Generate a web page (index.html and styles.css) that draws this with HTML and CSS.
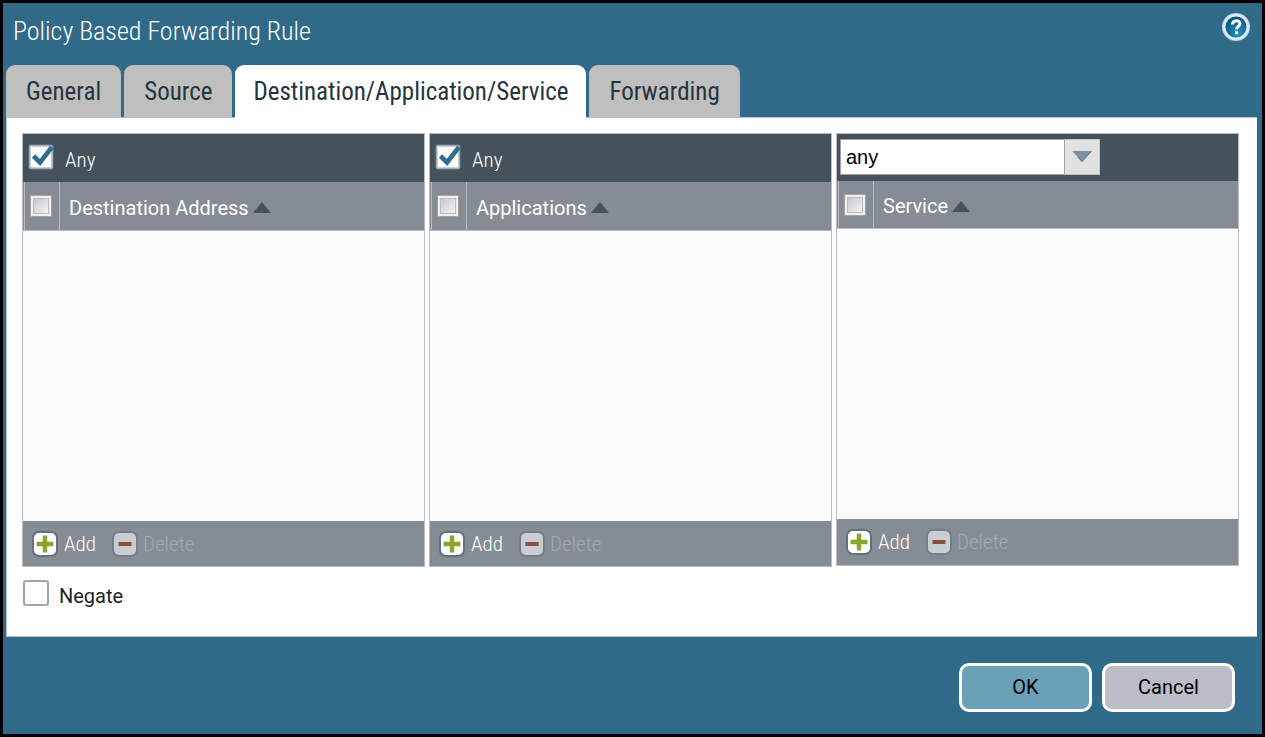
FILE: index.html
```
<!DOCTYPE html>
<html lang="en">
<head>
<meta charset="utf-8">
<meta name="viewport" content="width=device-width, initial-scale=1">
<title>Policy Based Forwarding Rule</title>
<link rel="stylesheet" href="styles.css">
</head>
<body>
<svg class="defs" aria-hidden="true">
  <defs>
    <radialGradient id="helpFill" cx=".6" cy=".8" r=".8"><stop offset="0" stop-color="#2590bd"/><stop offset="1" stop-color="#07517f"/></radialGradient>
    <linearGradient id="boxFill" x1="0" y1="0" x2="1" y2="1"><stop offset="0" stop-color="#c2c6d0"/><stop offset="1" stop-color="#f6f6f7"/></linearGradient>
    <symbol id="ticked" viewBox="0 0 26 26">
      <rect x=".5" y=".5" width="25" height="25" rx="2" fill="#71828e"/>
      <rect x="1.5" y="1.5" width="23" height="23" rx="1" fill="#c5d2dc"/>
      <rect x="3" y="3" width="20" height="20" fill="#fff"/>
      <path d="M5.500 12l6.500 6.500L24 3" fill="none" stroke="#2f6c8d" stroke-width="4.600"/>
    </symbol>
    <symbol id="unticked" viewBox="0 0 22 22">
      <rect x=".5" y=".5" width="21" height="21" fill="#f0f0f1" stroke="#a5a19d"/>
      <rect x="3.5" y="3.5" width="15" height="15" fill="url(#boxFill)" stroke="#b9bbc1"/>
    </symbol>
    <symbol id="sort" viewBox="0 0 18 11"><path d="M9 0l9 11H0z" fill="#46535d"/></symbol>
    <symbol id="plus" viewBox="0 0 26 26">
      <rect x="1" y="1" width="24" height="24" rx="6" fill="#fff" stroke="#5d7382" stroke-width="2"/>
      <path d="M4.500 13h17M13 4.500v17" stroke="#8ba62f" stroke-width="4.500"/>
    </symbol>
    <symbol id="minus" viewBox="0 0 26 26">
      <rect x="1" y="1" width="24" height="24" rx="6" fill="#caced2" stroke="#70808c" stroke-width="2"/>
      <path d="M6.500 13h13" stroke="#8b4e3f" stroke-width="4"/>
    </symbol>
  </defs>
</svg>
<main class="dialog">
  <header class="titlebar">
    <h1 class="title">Policy Based Forwarding Rule</h1>
    <button class="help" type="button" aria-label="Help">
      <svg viewBox="0 0 28 28"><circle cx="14" cy="14" r="14" fill="#b9d3e5"/><circle cx="14" cy="14" r="13" fill="#e0edf7"/><circle cx="14" cy="14" r="10.500" fill="url(#helpFill)"/><path d="M10.500 11.500c0-5 7.500-5 7.500-.7 0 2.600-3.500 2.800-3.500 5.700M14.500 18.200v3" fill="none" stroke="#fff" stroke-width="3"/></svg>
    </button>
  </header>
  <div class="tabs" role="tablist">
    <button class="tab" type="button" role="tab">General</button>
    <button class="tab" type="button" role="tab">Source</button>
    <button class="tab tab-active" type="button" role="tab" aria-selected="true">Destination/Application/Service</button>
    <button class="tab" type="button" role="tab">Forwarding</button>
  </div>
  <section class="content">
    <div class="panels">
      <section class="panel">
        <div class="toolbar">
          <label class="check"><span class="box"><input type="checkbox" checked><svg aria-hidden="true"><use href="#ticked"/></svg></span><span class="check-text">Any</span></label>
        </div>
        <table class="columns"><thead><tr>
          <th class="pick"><label class="box box-small"><input type="checkbox" aria-label="Select all addresses"><svg aria-hidden="true"><use href="#unticked"/></svg></label></th>
          <th class="name"><span class="heading">Destination Address<svg class="sort" aria-hidden="true"><use href="#sort"/></svg></span></th>
        </tr></thead></table>
        <div class="rows"></div>
        <footer class="actions">
          <button class="action" type="button"><svg aria-hidden="true"><use href="#plus"/></svg>Add</button>
          <button class="action" type="button" disabled><svg aria-hidden="true"><use href="#minus"/></svg>Delete</button>
        </footer>
      </section>
      <section class="panel">
        <div class="toolbar">
          <label class="check"><span class="box"><input type="checkbox" checked><svg aria-hidden="true"><use href="#ticked"/></svg></span><span class="check-text">Any</span></label>
        </div>
        <table class="columns"><thead><tr>
          <th class="pick"><label class="box box-small"><input type="checkbox" aria-label="Select all applications"><svg aria-hidden="true"><use href="#unticked"/></svg></label></th>
          <th class="name"><span class="heading">Applications<svg class="sort" aria-hidden="true"><use href="#sort"/></svg></span></th>
        </tr></thead></table>
        <div class="rows"></div>
        <footer class="actions">
          <button class="action" type="button"><svg aria-hidden="true"><use href="#plus"/></svg>Add</button>
          <button class="action" type="button" disabled><svg aria-hidden="true"><use href="#minus"/></svg>Delete</button>
        </footer>
      </section>
      <section class="panel panel-service">
        <div class="toolbar">
          <div class="combo">
            <select aria-label="Service match"><option>any</option></select>
            <span class="trigger"><svg viewBox="0 0 20 11" aria-hidden="true"><path d="M0 0h20L10 11z" fill="#7f929f"/><path d="M19 .5L10 10.500 6 6" fill="none" stroke="#5f727f"/></svg></span>
          </div>
        </div>
        <table class="columns"><thead><tr>
          <th class="pick"><label class="box box-small"><input type="checkbox" aria-label="Select all services"><svg aria-hidden="true"><use href="#unticked"/></svg></label></th>
          <th class="name"><span class="heading">Service<svg class="sort" aria-hidden="true"><use href="#sort"/></svg></span></th>
        </tr></thead></table>
        <div class="rows"></div>
        <footer class="actions">
          <button class="action" type="button"><svg aria-hidden="true"><use href="#plus"/></svg>Add</button>
          <button class="action" type="button" disabled><svg aria-hidden="true"><use href="#minus"/></svg>Delete</button>
        </footer>
      </section>
    </div>
    <label class="negate"><input type="checkbox"><span>Negate</span></label>
  </section>
  <footer class="buttons">
    <button class="button button-ok" type="button">OK</button>
    <button class="button" type="button">Cancel</button>
  </footer>
</main>
</body>
</html>
```
FILE: styles.css
```
* { box-sizing: border-box; }
body {
  margin: 0;
  font: 20px/24px Roboto, sans-serif;
  color: #202428;
}
button, input, select { margin: 0; font: inherit; }
button { border: 0; padding: 0; background: none; color: inherit; }
svg { display: block; }
.defs { position: absolute; width: 0; height: 0; }

.dialog {
  display: flex;
  flex-direction: column;
  min-height: 100vh;
  padding: 0 5px 0 3px;
  border: 3px solid #000;
  background: #306a88;
}
.titlebar {
  display: flex;
  justify-content: space-between;
  align-items: flex-start;
  height: 62px;
  padding: 10px 7px 0 7px;
}
.title {
  margin: 0;
  font: 300 26px/36px "Roboto Condensed", Roboto, sans-serif;
  color: #fff;
}
.help svg { width: 28px; height: 28px; }

.tabs { display: flex; gap: 3px; margin-bottom: -1px; }
.tab {
  height: 53px;
  padding: 0 20px;
  border-radius: 9px 9px 0 0;
  background: #bfbfbf;
  color: #26343c;
  font: 25px/53px "Roboto Condensed", Roboto, sans-serif;
}
.tab-active {
  position: relative;
  padding: 0 18px;
  background: #fff;
}

.content {
  flex: 1;
  display: flex;
  flex-direction: column;
  padding: 15px 18px 28px 15px;
  border: solid #bbbdc2;
  border-width: 1px 0 1px 1px;
  background: #fff;
}
.panels {
  flex: 1;
  display: grid;
  grid-template-columns: repeat(3, 1fr);
  gap: 4px;
}
.panel {
  display: flex;
  flex-direction: column;
  border: 1px solid #b9bcc6;
  background: #fbfdfc;
}
.panel-service { margin-bottom: 1px; }
.toolbar {
  display: flex;
  align-items: center;
  height: 48px;
  padding-left: 5px;
  background: #46525b;
}
.panel-service .toolbar { height: 47px; padding: 0 0 2px 3px; }
.check {
  display: flex;
  gap: 11px;
  font: 300 21px/26px "Roboto Condensed", Roboto, sans-serif;
  color: #fff;
}
.check-text { padding-top: 3px; }
.box { display: grid; width: 26px; height: 26px; }
.box > * { grid-area: 1 / 1; width: 100%; height: 100%; }
.box > input { opacity: 0; }
.box > svg { pointer-events: none; }
.box-small { width: 22px; height: 22px; }

.columns {
  width: 100%;
  height: 49px;
  border-collapse: separate;
  border-spacing: 0;
  background: #858c93;
  border-bottom: 1px solid #b9bcc6;
}
.panel-service .columns { height: 48px; }
.columns th { padding: 0; font-weight: 400; text-align: left; color: #fff; }
.columns .pick {
  width: 37px;
  padding-left: 7px;
  border-right: 1px solid #b9bcc6;
  box-shadow: inset 1px 0 #858c93, inset 2px 0 #b9bcc6;
}
.columns .name { padding: 3px 0 0 9px; }
.heading { display: flex; align-items: center; gap: 4px; }
.sort { width: 18px; height: 11px; }
.rows { flex: 1; }
.actions {
  display: flex;
  align-items: center;
  gap: 16px;
  height: 45px;
  padding-left: 9px;
  background: #858c93;
}
.panel-service .actions { height: 46px; }
.action {
  display: flex;
  align-items: center;
  gap: 6px;
  font: 300 21px/28px "Roboto Condensed", Roboto, sans-serif;
  color: #fff;
}
.action:disabled { gap: 5px; color: #a3a9b0; }
.action svg { width: 26px; height: 26px; }

.combo {
  display: grid;
  grid-template-columns: 1fr 36px;
  width: 260px;
  height: 36px;
}
.combo select {
  grid-area: 1 / 1 / 2 / 3;
  appearance: none;
  padding: 0 40px 0 5px;
  border: 1px solid #9da1a7;
  border-radius: 0;
  background: #fff;
  color: #000;
  font: 20px/24px "Liberation Sans", sans-serif;
}
.trigger {
  grid-area: 1 / 2;
  z-index: 1;
  display: grid;
  place-items: center;
  border: 1px solid #c0c1c3;
  border-left-color: #9da1a7;
  background: #e1e1e1;
  pointer-events: none;
}
.trigger svg { width: 20px; height: 11px; }

.negate { display: flex; gap: 10px; align-self: flex-start; padding: 13px 0 0 1px; }
.negate input {
  appearance: none;
  width: 26px;
  height: 26px;
  border: 2px solid #98a7b1;
  border-radius: 3px;
  background: #fff;
}
.negate span { padding-top: 4px; }

.buttons {
  display: flex;
  justify-content: flex-end;
  gap: 10px;
  padding: 26px 22px 22px;
}
.button {
  width: 133px;
  height: 49px;
  padding-bottom: 2px;
  border: 3px solid #fff;
  border-radius: 10px;
  background: #bbbec7;
  color: #000;
}
.button-ok { background: #6ba1b8; }
```
